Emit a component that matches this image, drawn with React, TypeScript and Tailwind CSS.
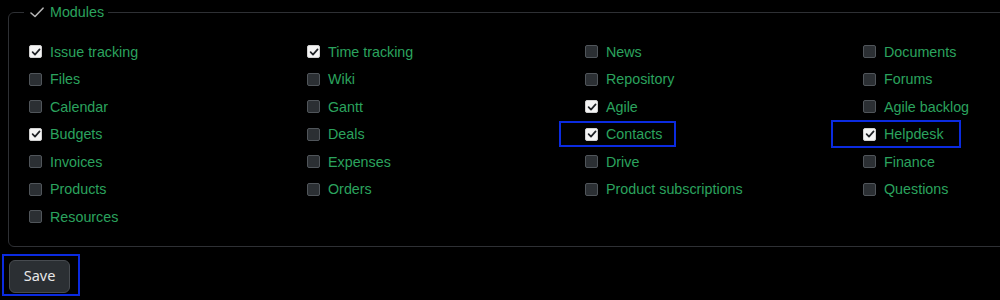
import React from "react";

type Mod = { name: string; on: boolean };

const modules: Mod[] = [
  { name: "Issue tracking", on: true },
  { name: "Time tracking", on: true },
  { name: "News", on: false },
  { name: "Documents", on: false },
  { name: "Files", on: false },
  { name: "Wiki", on: false },
  { name: "Repository", on: false },
  { name: "Forums", on: false },
  { name: "Calendar", on: false },
  { name: "Gantt", on: false },
  { name: "Agile", on: true },
  { name: "Agile backlog", on: false },
  { name: "Budgets", on: true },
  { name: "Deals", on: false },
  { name: "Contacts", on: true },
  { name: "Helpdesk", on: true },
  { name: "Invoices", on: false },
  { name: "Expenses", on: false },
  { name: "Drive", on: false },
  { name: "Finance", on: false },
  { name: "Products", on: false },
  { name: "Orders", on: false },
  { name: "Product subscriptions", on: false },
  { name: "Questions", on: false },
  { name: "Resources", on: false },
];

function Box({ on }: { on: boolean }) {
  if (on) {
    return (
      <span className="flex h-[13px] w-[13px] shrink-0 items-center justify-center rounded-[2px] border border-[#d0d0d0] bg-[#f4f4f4]">
        <svg width="10" height="10" viewBox="0 0 10 10" fill="none">
          <path d="M1.6 5.2 L4 7.6 L8.6 2.4" stroke="#1f2226" strokeWidth="1.7" strokeLinecap="round" strokeLinejoin="round" />
        </svg>
      </span>
    );
  }
  return <span className="block h-[13px] w-[13px] shrink-0 rounded-[2px] border border-[#50555a] bg-[#2b2f33]" />;
}

export default function App() {
  return (
    <div className="relative h-[300px] w-[1000px] overflow-hidden bg-black font-['Liberation_Sans',Arial,sans-serif]">
      <fieldset className="ml-[8px] w-[1160px] rounded-[6px] border border-[#2e3034] px-0 pb-[15px] pt-[14px]">
        <legend className="ml-[15px] flex h-[24px] items-center gap-[6px] pl-[6px] pr-[4px]">
          <svg width="14" height="11" viewBox="0 0 14 11" fill="none">
            <path d="M1 6 L5 9.5 L13 1.2" stroke="#b5b5b5" strokeWidth="1.6" strokeLinecap="round" strokeLinejoin="round" />
          </svg>
          <span className="text-[14.3px] leading-[24px] text-[#2ba35e]">Modules</span>
        </legend>
        <div className="grid grid-cols-[repeat(4,278px)] pl-[20px]">
          {modules.map((m) => (
            <label key={m.name} className="flex h-[27.5px] items-center gap-[8px]">
              <Box on={m.on} />
              <span className="text-[14.3px] leading-[16px] text-[#2ba35e]">{m.name}</span>
            </label>
          ))}
        </div>
      </fieldset>
      <div className="relative ml-[2px] mt-[7px] h-[42px] w-[78px] border-2 border-[#0b2be0] p-[4px] pl-[5px]">
        <button className="flex h-[33px] w-[61px] items-center justify-center rounded-[6px] border border-[#474b50] bg-[#2b2f33] font-['Noto_Sans',sans-serif] text-[14.5px] text-[#e8e8e8]">
          Save
        </button>
      </div>
      <span className="pointer-events-none absolute left-[559px] top-[121px] h-[26px] w-[117px] border-2 border-[#0b2be0]" />
      <span className="pointer-events-none absolute left-[831px] top-[120px] h-[28px] w-[130px] border-2 border-[#0b2be0]" />
    </div>
  );
}
